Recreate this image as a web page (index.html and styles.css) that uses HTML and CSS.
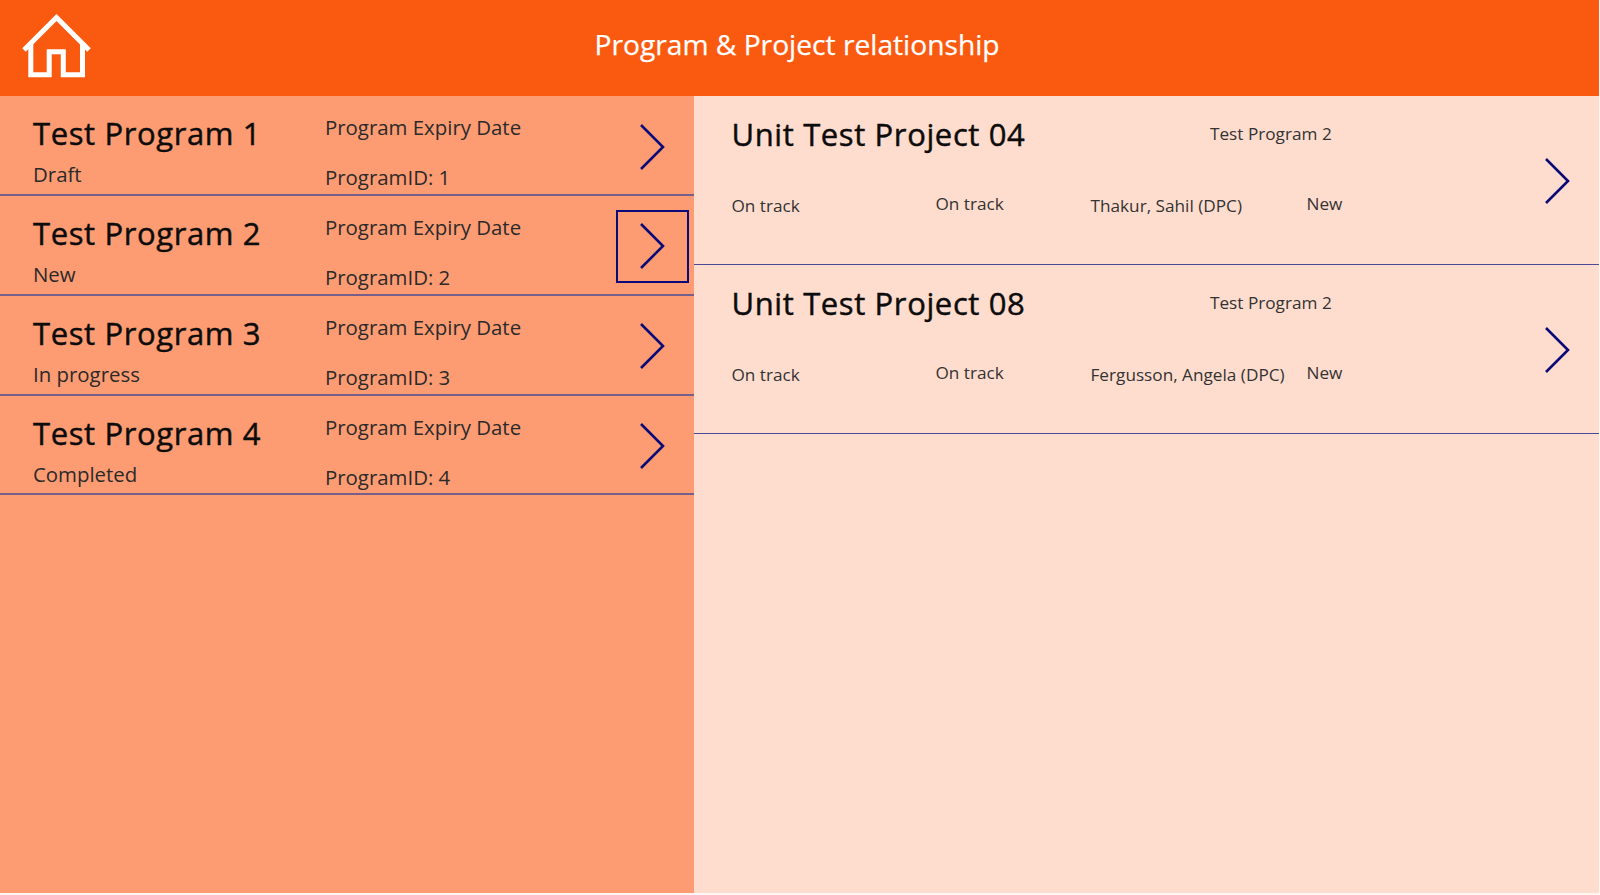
FILE: index.html
```html
<!DOCTYPE html>
<html lang="en">
<head>
<meta charset="utf-8">
<title>Program &amp; Project relationship</title>
<link rel="stylesheet" href="styles.css">
</head>
<body>
<div class="app">
  <header class="header">
    <svg class="home" viewBox="0 0 96 96" width="96" height="96" aria-hidden="true">
      <path d="M24 50 L56.5 17.5 L89 50" fill="none" stroke="#fff" stroke-width="5"/>
      <path d="M30.8 43V74.7H49.2V51.7H63.3V74.7H82.5V43" fill="none" stroke="#fff" stroke-width="5"/>
    </svg>
    <h1 class="title">Program &amp; Project relationship</h1>
  </header>
  <main class="main">
    <section class="programs">
      <div class="program">
        <div class="p-left"><div class="p-name">Test Program 1</div><div class="p-status">Draft</div></div>
        <div class="p-mid"><div>Program Expiry Date</div><div>ProgramID: 1</div></div>
        <div class="p-go"><svg class="chev" viewBox="0 0 73 72" width="73" height="72"><path d="M25 14 L47 36 L25 58"/></svg></div>
      </div>
      <div class="program">
        <div class="p-left"><div class="p-name">Test Program 2</div><div class="p-status">New</div></div>
        <div class="p-mid"><div>Program Expiry Date</div><div>ProgramID: 2</div></div>
        <div class="p-go focused"><svg class="chev" viewBox="0 0 73 72" width="73" height="72"><path d="M25 14 L47 36 L25 58"/></svg></div>
      </div>
      <div class="program">
        <div class="p-left"><div class="p-name">Test Program 3</div><div class="p-status">In progress</div></div>
        <div class="p-mid"><div>Program Expiry Date</div><div>ProgramID: 3</div></div>
        <div class="p-go"><svg class="chev" viewBox="0 0 73 72" width="73" height="72"><path d="M25 14 L47 36 L25 58"/></svg></div>
      </div>
      <div class="program">
        <div class="p-left"><div class="p-name">Test Program 4</div><div class="p-status">Completed</div></div>
        <div class="p-mid"><div>Program Expiry Date</div><div>ProgramID: 4</div></div>
        <div class="p-go"><svg class="chev" viewBox="0 0 73 72" width="73" height="72"><path d="M25 14 L47 36 L25 58"/></svg></div>
      </div>
    </section>
    <section class="projects">
      <div class="project">
        <div class="r-top"><div class="r-name">Unit Test Project 04</div><div class="r-prog">Test Program 2</div></div>
        <div class="r-bottom"><span class="c1">On track</span><span class="c2">On track</span><span class="c3">Thakur, Sahil (DPC)</span><span class="c4">New</span></div>
        <svg class="chev r-chev" viewBox="0 0 72 72" width="72" height="72"><path d="M24 14 L46 36 L24 58"/></svg>
      </div>
      <div class="project">
        <div class="r-top"><div class="r-name">Unit Test Project 08</div><div class="r-prog">Test Program 2</div></div>
        <div class="r-bottom"><span class="c1">On track</span><span class="c2">On track</span><span class="c3">Fergusson, Angela (DPC)</span><span class="c4">New</span></div>
        <svg class="chev r-chev" viewBox="0 0 72 72" width="72" height="72"><path d="M24 14 L46 36 L24 58"/></svg>
      </div>
    </section>
  </main>
</div>
</body>
</html>
```
FILE: styles.css
```css
* { box-sizing: border-box; }
html, body { margin: 0; padding: 0; height: 100%; background: #fdf6f2; }
body { font-family: "Open Sans", "Noto Sans", sans-serif; color: #111; overflow: hidden; }
.app { width: 1599px; height: 893px; display: flex; flex-direction: column; }
.header { height: 96px; background: #fa5a10; display: flex; align-items: center; flex: none; }
.home { flex: none; display: block; }
.title { margin: 0 0 8px 0; width: 1402px; text-align: center; font-size: 28.2px; font-weight: 400; color: #fff; line-height: 40px; -webkit-text-stroke: .25px #fff; }
.main { flex: 1; display: flex; min-height: 0; }
.programs { width: 694px; background: #fd9c72; flex: none; padding-top: .3px; }
.projects { flex: 1; background: #ffddce; }
.program { height: 99.8px; border-bottom: 2px solid #75608c; display: flex; }
.p-left { width: 325px; padding: 12px 0 0 33px; }
.p-name { font-size: 31px; font-weight: 400; line-height: 50px; letter-spacing: .62px; color: #0c0c0c; -webkit-text-stroke: .45px #0c0c0c; }
.p-status { font-size: 20.4px; line-height: 30px; margin-top: 1px; color: #2a2a2a; }
.p-mid { width: 291px; padding-top: 16px; font-size: 20.4px; line-height: 30px; color: #2a2a2a; }
.p-mid div + div { margin-top: 20px; }
.p-go { width: 73px; height: 72px; margin-top: 14.4px; flex: none; }
.p-go.focused { height: 73px; outline: 2.5px solid #0a0a78; outline-offset: -2.5px; }
.chev { display: block; }
.chev path { fill: none; stroke: #0a0a78; stroke-width: 2.6; }
.project { height: 169px; border-bottom: 1px solid #4a4a98; padding: 13px 0 0 37.5px; position: relative; }
.r-top { display: flex; }
.r-name { width: 478.5px; font-size: 31px; font-weight: 400; line-height: 50px; letter-spacing: .62px; color: #0c0c0c; -webkit-text-stroke: .45px #0c0c0c; }
.r-prog { font-size: 17.2px; line-height: 26px; padding-top: 12px; color: #333; }
.r-bottom { display: flex; margin-top: 34px; font-size: 17.2px; line-height: 26px; color: #333; }
.r-bottom span { display: block; }
.c1 { width: 204px; }
.c2 { width: 155px; position: relative; top: -2px; }
.c3 { width: 216px; }
.c4 { position: relative; top: -2px; }
.r-chev { position: absolute; right: 5px; top: 49px; }
```
